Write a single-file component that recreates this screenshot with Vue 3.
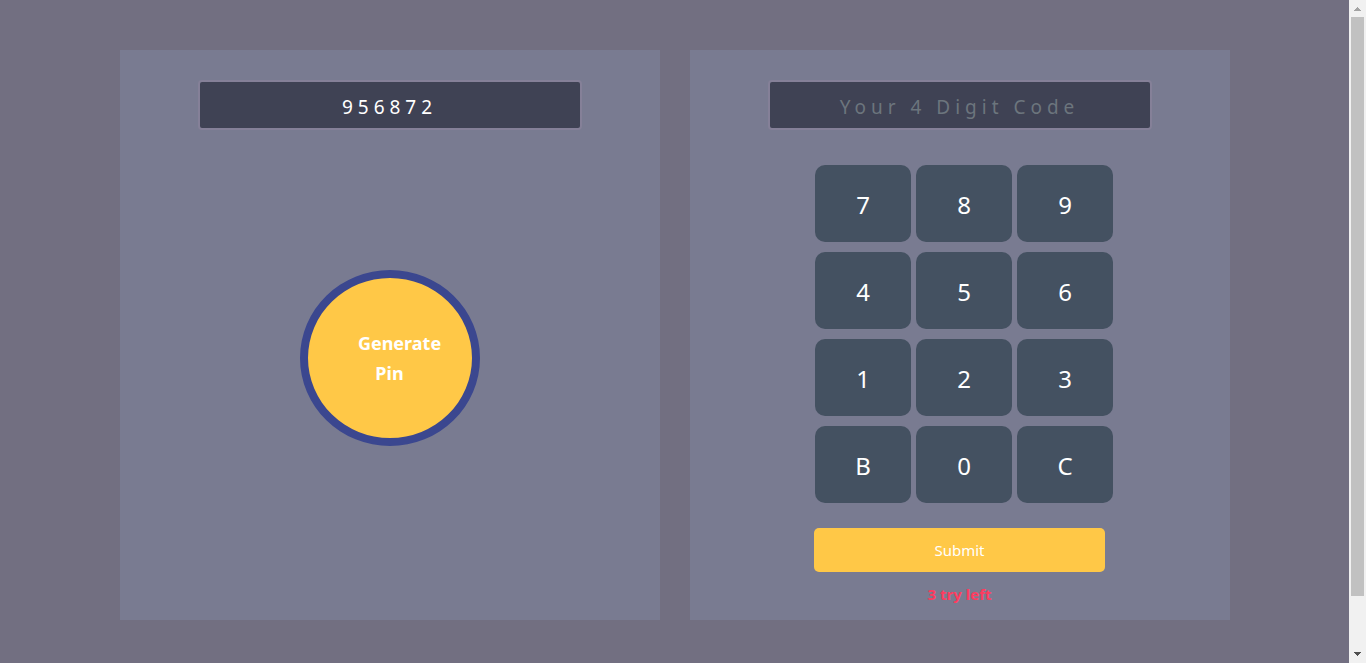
<script setup>
import { ref } from 'vue'

const pin = ref('956872')
const code = ref('')
const tries = ref(3)
const keys = ['7', '8', '9', '4', '5', '6', '1', '2', '3', 'B', '0', 'C']

function generate() {
  pin.value = String(Math.floor(1000 + Math.random() * 9000))
}

function press(key) {
  if (key === 'C') code.value = ''
  else if (key === 'B') code.value = code.value.slice(0, -1)
  else code.value += key
}

function submit() {
  if (code.value !== pin.value && tries.value > 0) tries.value -= 1
  code.value = ''
}
</script>

<template>
  <div class="page">
    <main class="container">
      <section class="panel">
        <input v-model="pin" class="display" type="text" aria-label="Generated pin" readonly />
        <div class="generate-area">
          <button class="generate" type="button" @click="generate">Generate<br />Pin</button>
        </div>
      </section>
      <form class="panel" @submit.prevent="submit">
        <input
          v-model="code"
          class="display entry"
          type="text"
          placeholder="Your 4 Digit Code"
          aria-label="Your 4 digit code"
        />
        <div class="keypad">
          <div class="keys">
            <button v-for="key in keys" :key="key" class="key" type="button" @click="press(key)">
              {{ key }}
            </button>
          </div>
          <button class="submit" type="submit">Submit</button>
        </div>
        <p class="tries">{{ tries }} try left</p>
      </form>
    </main>
    <div class="scrollbar" aria-hidden="true">
      <svg class="arrow" viewBox="0 0 17 17" shape-rendering="crispEdges">
        <path d="M8 7h1v1h1v1h1v1h1v1H5v-1h1V9h1V8h1z" fill="#a3a3a3" />
      </svg>
      <div class="track"><div class="thumb"></div></div>
      <svg class="arrow" viewBox="0 0 17 17" shape-rendering="crispEdges">
        <path d="M5 6h7v1h-1v1h-1v1H9v1H8V9H7V8H6V7H5z" fill="#505050" />
      </svg>
    </div>
  </div>
</template>

<style>
body {
  margin: 0;
  background: #726f81;
}
</style>

<style scoped>
.page {
  display: flex;
  min-height: 100vh;
  font-family: "Noto Sans", "Open Sans", sans-serif;
  color: #fff;
}

.page *,
.page {
  box-sizing: border-box;
}

button,
input {
  font-family: inherit;
  color: inherit;
}

button {
  padding: 0;
  border: 0;
  cursor: pointer;
}

.container {
  display: grid;
  flex: 1;
  grid-template-columns: 1fr 1fr;
  gap: 30px;
  align-self: flex-start;
  max-width: 1140px;
  margin: 0 auto;
  padding: 50px 15px 43px;
}

.panel {
  display: flex;
  flex-direction: column;
  align-items: center;
  padding: 30px 30px 14px;
  background: #797b91;
}

.display {
  width: 80%;
  max-width: 384px;
  height: 50px;
  padding: 4px 10px 0;
  border: 2px solid #858098;
  border-radius: 4px;
  background: #3f4254;
  font-size: 19px;
  letter-spacing: 5px;
  text-align: center;
}

.entry::placeholder {
  color: #6c757d;
  opacity: 1;
}

.generate-area {
  display: flex;
  flex: 1;
  align-items: center;
  padding-bottom: 20px;
}

.generate {
  width: 180px;
  height: 176px;
  border: 8px solid #3b478f;
  border-radius: 50%;
  background: #ffc847;
  font-size: 18px;
  font-weight: 700;
  line-height: 30px;
  text-indent: 20px;
}

.keypad {
  width: 291px;
  margin-top: 35px;
}

.keys {
  display: grid;
  grid-template-columns: repeat(3, 96px);
  gap: 10px 5px;
  margin-left: 1px;
}

.key {
  height: 77px;
  padding-top: 2px;
  border-radius: 10px;
  background: #445161;
  font-size: 24px;
}

.submit {
  width: 100%;
  height: 44px;
  margin-top: 25px;
  border-radius: 5px;
  background: #ffc847;
  font-size: 15px;
}

.tries {
  margin: 10px 0 0;
  color: #ff3c5f;
  font-size: 15px;
  font-weight: 700;
  line-height: 24px;
}

.scrollbar {
  display: flex;
  flex-direction: column;
  width: 17px;
  background: #f1f1f1;
}

.arrow {
  display: block;
  width: 17px;
  height: 17px;
}

.track {
  flex: 1;
  padding: 0 2px;
}

.thumb {
  height: 92%;
  background: #c1c1c1;
}
</style>
